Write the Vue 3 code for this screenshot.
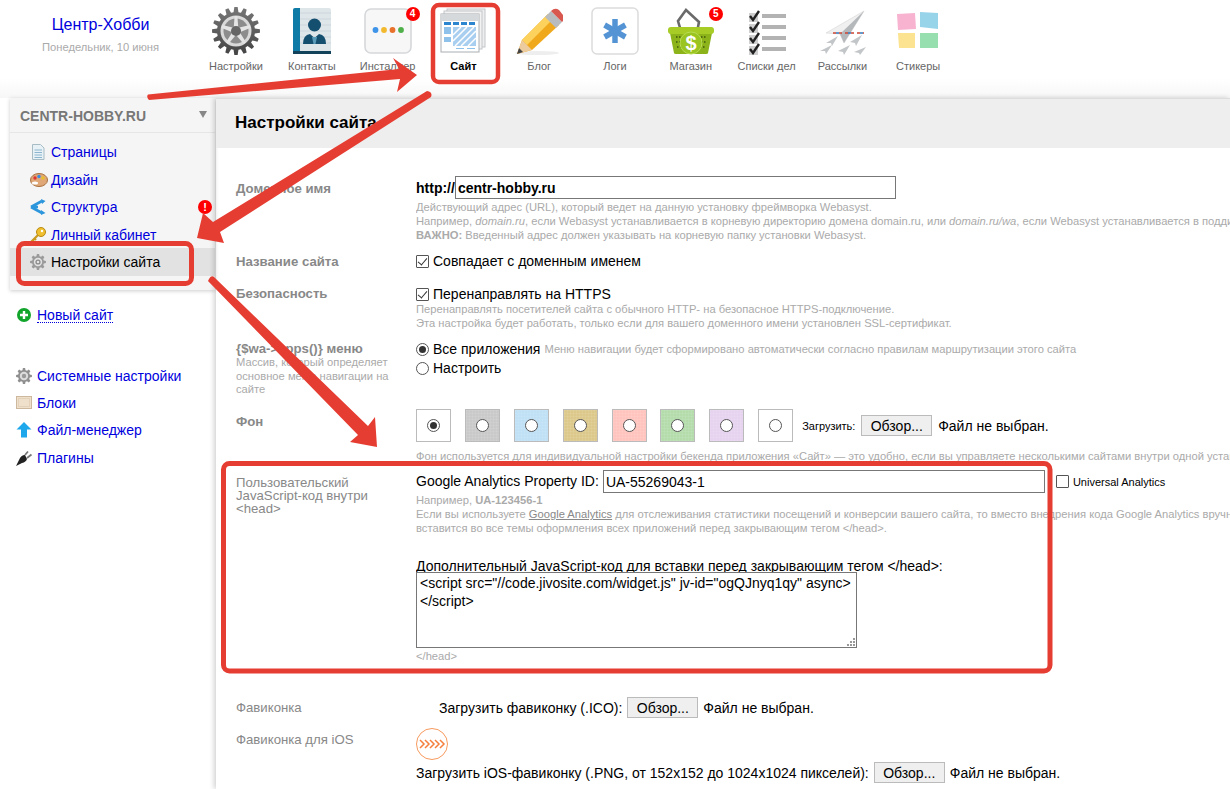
<script setup>
const apps = [
  { id: 'settings', label: 'Настройки' },
  { id: 'contacts', label: 'Контакты' },
  { id: 'installer', label: 'Инсталлер', badge: 4 },
  { id: 'site', label: 'Сайт', active: true },
  { id: 'blog', label: 'Блог' },
  { id: 'logs', label: 'Логи' },
  { id: 'shop', label: 'Магазин', badge: 5 },
  { id: 'tasks', label: 'Списки дел' },
  { id: 'mail', label: 'Рассылки' },
  { id: 'stickers', label: 'Стикеры' },
]

const siteMenu = [
  { id: 'pages', label: 'Страницы' },
  { id: 'design', label: 'Дизайн' },
  { id: 'routing', label: 'Структура' },
  { id: 'key', label: 'Личный кабинет' },
  { id: 'gear', label: 'Настройки сайта', selected: true },
]

const sysMenu = [
  { id: 'gear', label: 'Системные настройки' },
  { id: 'blocks', label: 'Блоки' },
  { id: 'upload', label: 'Файл-менеджер' },
  { id: 'plug', label: 'Плагины' },
]

const swatches = ['#ffffff', '#c9c9c9', '#bfe0f5', '#dcc88a', '#ffc4bd', '#b4dcab', '#e6d3f0', '#ffffff']

// gear outline, used by the big app icon and the small menu icons
function gear(cx, cy, outer, inner, teeth) {
  const step = (Math.PI * 2) / teeth
  const pts = []
  for (let i = 0; i < teeth; i++) {
    const a = i * step - Math.PI / 2
    const w = step * 0.22
    const pt = (r, t) => `${(cx + r * Math.cos(t)).toFixed(2)} ${(cy + r * Math.sin(t)).toFixed(2)}`
    pts.push(pt(inner, a - w * 1.5), pt(outer, a - w * 0.8), pt(outer, a + w * 0.8), pt(inner, a + w * 1.5))
  }
  return 'M' + pts.join('L') + 'Z'
}

const bigGear = gear(24, 24, 24, 19, 16)
const smallGear = gear(8, 8, 8, 6, 8)
const spokes = [0, 72, 144, 216, 288]
</script>

<template>
  <div class="page">
    <header class="top">
      <div class="brand">
        <a class="brand-name">Центр-Хобби</a>
        <div class="brand-date">Понедельник, 10 июня</div>
      </div>
      <nav class="apps">
        <div v-for="app in apps" :key="app.id" class="app" :class="{ active: app.active }">
          <span class="app-icon">
            <svg v-if="app.id === 'settings'" width="48" height="48" viewBox="0 0 48 48">
              <defs>
                <linearGradient id="gearFill" x1="0" y1="0" x2="0" y2="1">
                  <stop offset="0" stop-color="#777" />
                  <stop offset="1" stop-color="#444" />
                </linearGradient>
              </defs>
              <path :d="bigGear" fill="url(#gearFill)" />
              <circle cx="24" cy="24" r="15.5" fill="#d9d9d9" />
              <circle cx="24" cy="24" r="12.5" fill="#8c8c8c" />
              <g v-for="a in spokes" :key="a" :transform="`rotate(${a} 24 24)`">
                <path d="M21.5 24 L22.6 9 H25.4 L26.5 24Z" fill="#e4e4e4" />
              </g>
              <circle cx="24" cy="24" r="5" fill="#666" />
            </svg>

            <svg v-else-if="app.id === 'contacts'" width="48" height="48" viewBox="0 0 48 48">
              <rect x="5" y="1" width="38" height="45" rx="2" fill="#dfe6ea" />
              <path d="M11 6 H43 M11 12 H43 M11 18 H43 M11 24 H43 M11 30 H43 M11 36 H43" stroke="#ccd6dc" />
              <path d="M5 3 Q5 1 7 1 H12 V46 H7 Q5 46 5 44Z" fill="#0e7aa6" />
              <rect x="5" y="44" width="38" height="3" fill="#12435a" />
              <circle cx="26.5" cy="18" r="6.5" fill="#154f6f" />
              <path d="M15 37 Q15 28 22 27 L26.5 31 L31 27 Q38 28 38 37Z" fill="#154f6f" />
              <path d="M24 30 h5 l-1.5 7 h-2Z" fill="#5a9cba" />
            </svg>

            <svg v-else-if="app.id === 'installer'" width="48" height="48" viewBox="0 0 48 48">
              <rect x="1" y="2" width="46" height="44" rx="6" fill="#f7f7f7" stroke="#d5d8da" stroke-width="1.6" />
              <circle cx="11.5" cy="23" r="2.9" fill="#3d94e8" />
              <circle cx="20" cy="23" r="2.9" fill="#f2b92f" />
              <circle cx="28.5" cy="23" r="2.9" fill="#e8712b" />
              <circle cx="37" cy="23" r="2.9" fill="#4fb04a" />
            </svg>

            <svg v-else-if="app.id === 'site'" width="48" height="48" viewBox="0 0 48 48">
              <rect x="8" y="2" width="38" height="38" fill="#eee" stroke="#c2c6c9" />
              <rect x="5" y="4" width="38" height="38" fill="#f3f3f3" stroke="#c2c6c9" />
              <rect x="2" y="7" width="38" height="38" fill="#fff" stroke="#a9aeb2" />
              <rect x="2" y="7" width="38" height="7" fill="#d6d9db" />
              <rect x="5" y="15" width="7" height="3" fill="#2b86cf" />
              <rect x="14" y="15" width="6" height="3" fill="#2b86cf" />
              <rect x="22" y="15" width="6" height="3" fill="#2b86cf" />
              <rect x="30" y="15" width="6" height="3" fill="#2b86cf" />
              <rect x="5" y="20" width="7" height="7" fill="#8fc2ea" />
              <rect x="5" y="30" width="7" height="5" fill="#8fc2ea" />
              <rect x="14" y="20" width="23" height="19" fill="#a9cff0" />
              <path d="M14 28 L22 20 M14 34 L28 20 M16 39 L35 20 M22 39 L37 24 M29 39 L37 31" stroke="#fff" stroke-width="1.5" />
              <rect x="17" y="41" width="8" height="1" fill="#8fc2ea" />
              <rect x="28" y="41" width="8" height="1" fill="#8fc2ea" />
            </svg>

            <svg v-else-if="app.id === 'blog'" width="48" height="48" viewBox="0 0 48 48">
              <ellipse cx="22" cy="46" rx="22" ry="2" fill="#eee" />
              <path d="M2 47 L7 33 L33 7 L44 18 L17 43Z" fill="#f0a91d" />
              <path d="M7 33 L33 7 L38 12 L12 38Z" fill="#fcd25c" />
              <path d="M2 47 L7 33 L12 38 L17 43Z" fill="#eccb9e" />
              <path d="M2 47 L4 41 L8 45Z" fill="#444" />
              <path d="M30 10 L36 4 L47 15 L41 21Z" fill="#b9bcbe" />
              <path d="M36 4 Q40 0 44 3 L48 8 Q50 12 47 15Z" fill="#d8574e" />
            </svg>

            <svg v-else-if="app.id === 'logs'" width="48" height="48" viewBox="0 0 48 48">
              <rect x="1" y="1" width="46" height="46" rx="5" fill="#fff" stroke="#dcdcdc" stroke-width="1.5" />
              <g stroke="#5594d4" stroke-width="5.5">
                <path d="M24 12 V36" />
                <path d="M13.6 18 L34.4 30" />
                <path d="M13.6 30 L34.4 18" />
              </g>
            </svg>

            <svg v-else-if="app.id === 'shop'" width="48" height="48" viewBox="0 0 48 48">
              <path d="M14 24 L11 14 L19 3 L32 15 L30 25" fill="none" stroke="#6a6a6a" stroke-width="2.6" />
              <path d="M2 21 H46 L41 46 Q41 47 39 47 H9 Q7 47 7 46Z" fill="#8cb319" />
              <rect x="1" y="20" width="46" height="7" rx="3" fill="#a6cc25" />
              <path d="M9 30 h5 M9 35 h5 M10 40 h5 M34 30 h5 M34 35 h5 M33 40 h5" stroke="#40590a" stroke-width="1.6" stroke-dasharray="1.5 1.5" />
              <circle cx="24" cy="36" r="11" fill="#9ac41f" stroke="#b9dc55" />
              <text x="24" y="43" text-anchor="middle" class="dollar">$</text>
            </svg>

            <svg v-else-if="app.id === 'tasks'" width="48" height="48" viewBox="0 0 48 48">
              <g v-for="(y, i) in [4, 15, 26, 37]" :key="i">
                <rect x="6" :y="y + 2" width="9" height="9" fill="#cfcfcf" />
                <path :d="`M7 ${y + 5} L10 ${y + 9} L16 ${y}`" fill="none" stroke="#222" stroke-width="2.4" />
                <rect x="19" :y="y + 3" width="24" height="4" fill="#b3b3b3" />
              </g>
            </svg>

            <svg v-else-if="app.id === 'mail'" width="48" height="48" viewBox="0 0 48 48">
              <path d="M46 4 L8 26 L22 27 L26 36 Z" fill="#f0f0f0" stroke="#d5d5d5" stroke-width=".6" />
              <path d="M46 4 L22 27 L26 36Z" fill="#b5b8bb" />
              <path d="M15 26 h31" stroke="#c43" stroke-width="1.4" stroke-dasharray="3 3" />
              <path d="M18 26 h28" stroke="#37b" stroke-width="1.4" stroke-dasharray="3 9" />
              <g fill="#c3c6c8">
                <path d="M20 29 L8 36 L13 36 L14 39Z" />
                <path d="M44 28 L32 35 L37 36 L38 39Z" />
                <path d="M14 38 L2 44 L7 44 L8 47Z" />
                <path d="M32 38 L20 44 L25 45 L26 48Z" />
                <path d="M48 40 L36 45 L41 46 L42 48Z" />
              </g>
            </svg>

            <svg v-else-if="app.id === 'stickers'" width="48" height="48" viewBox="0 0 48 48">
              <path d="M3 7 L21 6 L22 22 L4 23Z" fill="#f8b3d0" />
              <path d="M26 5 L44 6 L44 22 L26 20Z" fill="#97d4ea" />
              <path d="M4 26 L21 26 L21 41 L5 41Z" fill="#fbe391" />
              <path d="M26 26 L44 26 L44 41 L26 41Z" fill="#97dfae" />
            </svg>

            <span v-if="app.badge" class="badge">{{ app.badge }}</span>
          </span>
          <span class="app-label">{{ app.label }}</span>
        </div>
      </nav>
    </header>

    <div class="layout">
      <aside class="side">
        <div class="side-box">
          <div class="side-title">
            <span>CENTR-HOBBY.RU</span>
            <i class="caret" />
          </div>
          <ul class="menu site-menu">
            <li v-for="item in siteMenu" :key="item.id" :class="{ selected: item.selected }">
              <svg v-if="item.id === 'pages'" class="micon" viewBox="0 0 16 16" preserveAspectRatio="xMinYMid meet">
                <path d="M2.5 .5 H10.5 L14 4 V15.5 H2.5Z" fill="#e8f1f6" stroke="#a8bcc6" />
                <path d="M4.5 6 H12 M4.5 8.5 H12 M4.5 11 H12 M4.5 13.500 H12" stroke="#8cb6d0" />
              </svg>
              <svg v-else-if="item.id === 'design'" class="micon" viewBox="0 0 18 16" preserveAspectRatio="xMinYMid meet">
                <ellipse cx="9" cy="8" rx="8.5" ry="6.5" fill="#e0a878" stroke="#a86f3c" />
                <circle cx="5" cy="6" r="1.7" fill="#d33" />
                <circle cx="9" cy="4.5" r="1.7" fill="#3a8de0" />
                <circle cx="13" cy="6" r="1.7" fill="#e8c02c" />
                <ellipse cx="5" cy="11" rx="3" ry="1.5" fill="#fff" />
              </svg>
              <svg v-else-if="item.id === 'routing'" class="micon" viewBox="0 0 16 16" preserveAspectRatio="xMinYMid meet">
                <path d="M1 8 L12 2 M1 8 L12 14 M1 8 H8" stroke="#2c96dc" stroke-width="2.6" fill="none" />
                <path d="M11 0 L15.5 2 L12 5Z M11 11 L15.5 14 L11 16Z" fill="#2c96dc" />
              </svg>
              <svg v-else-if="item.id === 'key'" class="micon" viewBox="0 0 16 16" preserveAspectRatio="xMinYMid meet">
                <circle cx="11" cy="5" r="4.5" fill="#f0c030" stroke="#b98a10" />
                <circle cx="12" cy="4" r="1.2" fill="#fff" />
                <path d="M8 8 L1 15 M2.5 13.500 L4.500 15.500 M4.500 11.500 L6 13" stroke="#c99a20" stroke-width="2.2" />
              </svg>
              <svg v-else class="micon" viewBox="0 0 16 16" preserveAspectRatio="xMinYMid meet">
                <path :d="smallGear" fill="#9a9a9a" />
                <circle cx="8" cy="8" r="4.2" fill="#e2e2e2" />
                <circle cx="8" cy="8" r="2.6" fill="#8a8a8a" />
                <circle cx="8" cy="8" r="1.3" fill="#e2e2e2" />
              </svg>
              <a class="mlink">{{ item.label }}</a>
              <span v-if="item.id === 'routing'" class="alert">!</span>
            </li>
          </ul>
        </div>

        <div class="new-site">
          <svg width="14" height="14" viewBox="0 0 14 14">
            <circle cx="7" cy="7" r="7" fill="#12a52c" />
            <path d="M7 3 V11 M3 7 H11" stroke="#fff" stroke-width="2.4" />
          </svg>
          <a class="dotted">Новый сайт</a>
        </div>

        <ul class="menu sys-menu">
          <li v-for="item in sysMenu" :key="item.id">
            <svg v-if="item.id === 'gear'" class="micon" viewBox="0 0 16 16" preserveAspectRatio="xMinYMid meet">
              <path :d="smallGear" fill="#8f8f8f" />
              <circle cx="8" cy="8" r="4.2" fill="#dcdcdc" />
              <circle cx="8" cy="8" r="2.2" fill="#999" />
            </svg>
            <svg v-else-if="item.id === 'blocks'" class="micon" viewBox="0 0 16 16" preserveAspectRatio="xMinYMid meet">
              <rect x=".5" y="1.500" width="15" height="12" fill="#efe0cc" stroke="#cdb89d" />
              <rect x="2.5" y="3.500" width="11" height="8" fill="none" stroke="#d6c3a8" stroke-dasharray="1 1" />
            </svg>
            <svg v-else-if="item.id === 'upload'" class="micon" viewBox="0 0 16 16" preserveAspectRatio="xMinYMid meet">
              <path d="M8 0 L15.5 7.5 H11 V15.5 H5 V7.5 H.5Z" fill="#1ea7ea" />
            </svg>
            <svg v-else class="micon" viewBox="0 0 16 16" preserveAspectRatio="xMinYMid meet">
              <path d="M0 16 L3 10 Q5 5 9 5 L11 9 Q10 12 6 13Z" fill="#222" />
              <path d="M9 5 L12 1.500 M11 8 L15.500 4.500" stroke="#777" stroke-width="1.8" />
            </svg>
            <a class="mlink">{{ item.label }}</a>
          </li>
        </ul>
      </aside>

      <main class="main">
        <h1 class="main-title">Настройки сайта</h1>

        <section class="form">
          <div class="row domain">
            <div class="name">Доменное имя</div>
            <div class="value">
              <div class="domain-line">
                <b>http://</b><input class="domain-input" type="text" value="centr-hobby.ru">
              </div>
              <p class="hint">Действующий адрес (URL), который ведет на данную установку фреймворка Webasyst.</p>
              <p class="hint">Например, <i>domain.ru</i>, если Webasyst устанавливается в корневую директорию домена domain.ru, или <i>domain.ru/wa</i>, если Webasyst устанавливается в поддиректорию</p>
              <p class="hint"><b>ВАЖНО:</b> Введенный адрес должен указывать на корневую папку установки Webasyst.</p>
            </div>
          </div>

          <div class="row site-name">
            <div class="name">Название сайта</div>
            <div class="value"><label class="check"><input type="checkbox" checked>Совпадает с доменным именем</label></div>
          </div>

          <div class="row security">
            <div class="name">Безопасность</div>
            <div class="value">
              <label class="check"><input type="checkbox" checked>Перенаправлять на HTTPS</label>
              <p class="hint pull">Перенаправлять посетителей сайта с обычного HTTP- на безопасное HTTPS-подключение.</p>
              <p class="hint">Эта настройка будет работать, только если для вашего доменного имени установлен SSL-сертификат.</p>
            </div>
          </div>

          <div class="row apps-menu">
            <div class="name">
              {$wa->apps()} меню
              <p class="name-hint">Массив, который определяет<br>основное меню навигации на<br>сайте</p>
            </div>
            <div class="value">
              <label class="check"><input type="radio" name="menu" checked>Все приложения <span class="hint-inline">Меню навигации будет сформировано автоматически согласно правилам маршрутизации этого сайта</span></label>
              <label class="check second"><input type="radio" name="menu">Настроить</label>
            </div>
          </div>

          <div class="row background">
            <div class="name">Фон</div>
            <div class="value">
              <div class="swatches">
                <label v-for="(color, i) in swatches" :key="i" class="swatch" :style="{ backgroundColor: color }">
                  <input type="radio" name="bg" :checked="i === 0">
                </label>
                <span class="small-label">Загрузить:</span>
                <button class="browse">Обзор...</button>
                <span class="nofile">Файл не выбран.</span>
              </div>
              <p class="hint">Фон используется для индивидуальной настройки бекенда приложения «Сайт» — это удобно, если вы управляете несколькими сайтами внутри одной установки</p>
            </div>
          </div>

          <div class="row analytics">
            <div class="name plain">Пользовательский JavaScript-код внутри &lt;head&gt;</div>
            <div class="value">
              <div class="ga-line">
                <span class="ga-text">Google Analytics Property ID:</span>
                <input class="ga-input" type="text" value="UA-55269043-1">
                <label class="ua"><input type="checkbox">Universal Analytics</label>
              </div>
              <p class="hint">Например, <b>UA-123456-1</b></p>
              <p class="hint">Если вы используете <u class="hint-link">Google Analytics</u> для отслеживания статистики посещений и конверсии вашего сайта, то вместо внедрения кода Google Analytics вручную</p>
              <p class="hint">вставится во все темы оформления всех приложений перед закрывающим тегом &lt;/head&gt;.</p>
              <div class="extra-label">Дополнительный JavaScript-код для вставки перед закрывающим тегом &lt;/head&gt;:</div>
              <div class="code-wrap">
                <textarea class="code" spellcheck="false">&lt;script src="//code.jivosite.com/widget.js" jv-id="ogQJnyq1qy" async&gt;
&lt;/script&gt;</textarea>
                <svg class="grip" width="10" height="10" viewBox="0 0 10 10">
                  <path d="M7 1h2v2H7z M4 4h2v2H4z M7 4h2v2H7z M1 7h2v2H1z M4 7h2v2H4z M7 7h2v2H7z" fill="#999" />
                </svg>
              </div>
              <p class="hint">&lt;/head&gt;</p>
            </div>
          </div>

          <div class="row favicon">
            <div class="name plain-row">Фавиконка</div>
            <div class="value upload-line indent">
              <span>Загрузить фавиконку (.ICO):</span>
              <button class="browse">Обзор...</button>
              <span class="nofile">Файл не выбран.</span>
            </div>
          </div>

          <div class="row ios">
            <div class="name plain-row">Фавиконка для iOS</div>
            <div class="value">
              <svg class="ios-icon" width="32" height="32" viewBox="0 0 32 32">
                <circle cx="16" cy="16" r="15.5" fill="#fff" stroke="#f79a5e" />
                <path d="M4 12 L8 16 L4 20 M9 12 L13 16 L9 20 M14 12 L18 16 L14 20 M19 12 L23 16 L19 20 M24 12 L28 16 L24 20" fill="none" stroke="#f47f3c" stroke-width="1.5" />
              </svg>
              <div class="upload-line">
                <span>Загрузить iOS-фавиконку (.PNG, от 152x152 до 1024x1024 пикселей):</span>
                <button class="browse">Обзор...</button>
                <span class="nofile">Файл не выбран.</span>
              </div>
            </div>
          </div>
        </section>
      </main>
    </div>

    <!-- annotation layer drawn over the screenshot -->
    <svg class="marks" width="1230" height="789" viewBox="0 0 1230 789">
      <g fill="none" stroke="#e63d32" stroke-linejoin="round">
        <rect x="433" y="5" width="65" height="77" rx="6" stroke-width="4.5" />
        <rect x="18.5" y="243.500" width="173" height="40" rx="6" stroke-width="5" />
        <rect x="223.500" y="463.500" width="826.500" height="207.500" rx="6" stroke-width="5" />
      </g>
      <g fill="#e63d32">
        <path d="M148 94.500 L399 69 L393 58 L417 75 L397 92 L400 79 L149 100 Q146 97 148 94.500Z" />
        <path d="M427 91 Q433 92 431 97 L220 232 L224 243 L197 238 L203 213 L213 222Z" />
        <path d="M209 279 Q211 275 214 277 L368 426 L375 417 L377 447 L350 442 L358 435 L208 281Z" />
      </g>
    </svg>
  </div>
</template>

<style>
html, body {
  margin: 0;
  background: #fff;
}
</style>

<style scoped>
.page {
  position: relative;
  width: 1230px;
  height: 789px;
  overflow: hidden;
  font-family: "Liberation Sans", Arial, sans-serif;
  font-size: 13px;
  color: #000;
  background: #fff;
}

.top {
  display: flex;
  height: 98px;
  background: linear-gradient(#fff 80%, #f7f7f7);
  box-sizing: border-box;
}

.brand {
  width: 198.100px;
  padding: 15px 0 0 3px;
  text-align: center;
  box-sizing: border-box;
}

.brand-name {
  font-size: 16px;
  line-height: 20px;
  color: #0000dd;
}

.brand-date {
  margin-top: 5px;
  font-size: 11.200px;
  line-height: 14px;
  color: #aaa;
}

.apps {
  display: flex;
}

.app {
  width: 75.800px;
  display: flex;
  flex-direction: column;
  align-items: center;
  padding-top: 7px;
}

.app-icon {
  position: relative;
  display: block;
  width: 48px;
  height: 48px;
}

.app-icon svg {
  display: block;
}

.app-label {
  margin-top: 5px;
  font-size: 11px;
  line-height: 13px;
  color: #666;
  white-space: nowrap;
}

.app.active .app-label {
  color: #000;
  font-weight: bold;
}

.dollar {
  font: bold 20px "Liberation Sans", sans-serif;
  fill: #fff;
}

.badge {
  position: absolute;
  top: 0;
  right: -8px;
  width: 14px;
  height: 14px;
  border-radius: 50%;
  background: #f00;
  color: #fff;
  font-size: 10px;
  font-weight: bold;
  line-height: 14px;
  text-align: center;
}

.layout {
  display: flex;
  height: 691px;
}

.side {
  width: 216px;
  flex: none;
}

.side-box {
  width: 205px;
  height: 192px;
  margin-left: 10px;
  background: #f5f5f5;
  box-shadow: 0 1px 4px rgba(0, 0, 0, .2);
}

.side-title {
  display: flex;
  justify-content: space-between;
  align-items: center;
  height: 35px;
  padding: 2px 8px 0 10px;
  box-sizing: border-box;
  font-size: 14px;
  font-weight: bold;
  color: #777;
  border-bottom: 1px solid #e6e6e6;
}

.caret {
  width: 0;
  height: 0;
  border-left: 4px solid transparent;
  border-right: 4px solid transparent;
  border-top: 7px solid #888;
  margin-bottom: 3px;
}

.menu {
  list-style: none;
  margin: 0;
  padding: 0;
}

.menu li {
  position: relative;
  display: flex;
  align-items: center;
  height: 27.500px;
  font-size: 14px;
}

.site-menu {
  padding-top: 5.300px;
}

.site-menu li {
  padding-left: 20px;
}

.micon {
  width: 21px;
  height: 16px;
  flex: none;
  display: block;
}

.mlink {
  color: #0000dd;
  white-space: nowrap;
}

.site-menu li.selected {
  background: #e2e2e2;
}

.site-menu li.selected .mlink {
  color: #000;
}

.alert {
  position: absolute;
  right: 3px;
  top: 7px;
  width: 14px;
  height: 14px;
  border-radius: 50%;
  background: #f00;
  color: #fff;
  font-size: 11px;
  font-weight: bold;
  line-height: 14px;
  text-align: center;
}

.new-site {
  display: flex;
  align-items: center;
  gap: 6px;
  margin: 17px 0 0 17px;
  height: 16px;
  font-size: 14px;
}

.dotted {
  color: #0000dd;
  border-bottom: 1px dotted #0000dd;
  line-height: 14px;
}

.sys-menu {
  margin-top: 39px;
  padding-left: 16px;
}

.sys-menu li {
  height: 27.400px;
}

.main {
  flex: 1;
  min-width: 0;
  overflow: hidden;
  box-shadow: -2px 0 5px rgba(0, 0, 0, .18);
  border-top: 1px solid #ddd;
  position: relative;
}

.main-title {
  margin: 0;
  height: 49px;
  padding-left: 19px;
  background: #eee;
  font-size: 17px;
  line-height: 47px;
  font-weight: bold;
}

.form {
  padding: 28px 0 0 20px;
}

.row {
  display: grid;
  grid-template-columns: 180px 814px;
  column-gap: 0;
}

.name {
  font-size: 13.200px;
  font-weight: bold;
  line-height: 18px;
  color: #888;
}

.name.plain {
  font-weight: normal;
  line-height: 13px;
  padding-top: 6px;
  width: 140px;
}

.name.plain-row {
  font-weight: normal;
}

.name-hint {
  margin: -2px 0 0;
  font-size: 11.200px;
  font-weight: normal;
  line-height: 13.500px;
  color: #aaa;
  white-space: nowrap;
}

.value {
  min-width: 0;
  overflow: hidden;
  font-size: 14px;
}

.hint {
  margin: 0;
  font-size: 11.200px;
  line-height: 14px;
  color: #aaa;
  white-space: nowrap;
}

.hint.pull {
  margin-top: -1px;
}

.hint-inline {
  font-size: 11.200px;
  color: #aaa;
}

.hint-link {
  color: #888;
}

.domain .name {
  padding-top: 4px;
}

.domain-line {
  display: flex;
  align-items: center;
  height: 23px;
  margin-bottom: 1px;
}

.domain-line b {
  font-size: 14px;
}

.domain-input {
  width: 441px;
  height: 23px;
  box-sizing: border-box;
  margin: 0;
  padding: 0 2px;
  border: 1px solid #777;
  font: bold 14px "Liberation Sans", sans-serif;
}

.check {
  display: flex;
  align-items: center;
  height: 18px;
  white-space: nowrap;
}

.check input,
.swatch input,
.ua input {
  appearance: none;
  position: relative;
  box-sizing: border-box;
  width: 13px;
  height: 13px;
  flex: none;
  background: #fff;
  border: 1px solid #555;
}

.check input {
  margin: 0 4px 0 0;
}

input[type="checkbox"] {
  border-radius: 1px;
}

input[type="radio"] {
  border-radius: 50%;
}

input[type="checkbox"]:checked::after {
  content: "";
  position: absolute;
  left: 3px;
  top: 0;
  width: 4px;
  height: 8px;
  border: solid #333;
  border-width: 0 1.5px 1.5px 0;
  transform: rotate(40deg);
}

input[type="radio"]:checked::after {
  content: "";
  position: absolute;
  left: 2px;
  top: 2px;
  width: 7px;
  height: 7px;
  border-radius: 50%;
  background: #333;
}

.check .hint-inline {
  margin-left: 4px;
}

.check.second {
  margin-top: 1px;
}

.site-name {
  margin-top: 10px;
}

.site-name .name {
  padding-top: 1px;
}

.security {
  margin-top: 14px;
}

.apps-menu {
  margin-top: 10px;
  height: 58px;
}

.background {
  margin-top: 11px;
}

.background .name {
  padding-top: 4px;
}

.swatches {
  display: flex;
  align-items: center;
  gap: 13.900px;
  margin-bottom: 7px;
  height: 33px;
}

.swatch {
  width: 35px;
  height: 33px;
  box-sizing: border-box;
  border: 1px solid #bbb;
  display: flex;
  align-items: center;
  justify-content: center;
  background-image:
    linear-gradient(rgba(255, 255, 255, .07) 1px, transparent 1px),
    linear-gradient(90deg, rgba(255, 255, 255, .07) 1px, transparent 1px);
  background-size: 3px 3px;
}

.swatch input {
  margin: 0;
}

.small-label {
  font-size: 11px;
  margin-left: -5px;
  margin-right: -8px;
}

.browse {
  height: 21px;
  width: 71px;
  padding: 0;
  box-sizing: border-box;
  border: 1px solid #bbb;
  background: #efefef;
  color: #000;
  font: 14px "Liberation Sans", sans-serif;
  flex: none;
}

.swatches .browse {
  margin-right: -8px;
}

.nofile {
  white-space: nowrap;
}

.analytics {
  margin-top: 7px;
}

.ga-line {
  display: flex;
  align-items: center;
  height: 23px;
  white-space: nowrap;
}

.ga-text {
  margin-top: -1px;
}

.ga-input {
  width: 442px;
  height: 23px;
  box-sizing: border-box;
  margin: 0 0 0 4px;
  padding: 0 2px;
  border: 1px solid #777;
  font: 14px "Liberation Sans", sans-serif;
}

.ua {
  display: flex;
  align-items: center;
  margin-left: 11px;
  font-size: 11px;
}

.ua input {
  margin: 0 4px 0 0;
}

.extra-label {
  margin-top: 23px;
  height: 14px;
  line-height: 16px;
  white-space: nowrap;
}

.code-wrap {
  position: relative;
  width: 441px;
  height: 76px;
  margin-bottom: 1px;
}

.code {
  display: block;
  width: 441px;
  height: 76px;
  box-sizing: border-box;
  margin: 0;
  padding: 1px 3px;
  border: 1px solid #777;
  font: 14px/18px "Liberation Sans", sans-serif;
  color: #000;
  resize: none;
}

.grip {
  position: absolute;
  right: 1px;
  bottom: 1px;
}

.favicon {
  margin-top: 34px;
}

.favicon .name {
  padding-top: 2px;
}

.upload-line {
  display: flex;
  align-items: center;
  gap: 5px;
  height: 21px;
  white-space: nowrap;
}

.upload-line.indent {
  padding-left: 23px;
}

.ios {
  margin-top: 10px;
}

.ios .name {
  padding-top: 3px;
}

.ios-icon {
  display: block;
  margin-bottom: 2px;
}

.marks {
  position: absolute;
  top: 0;
  left: 0;
  pointer-events: none;
}
</style>
